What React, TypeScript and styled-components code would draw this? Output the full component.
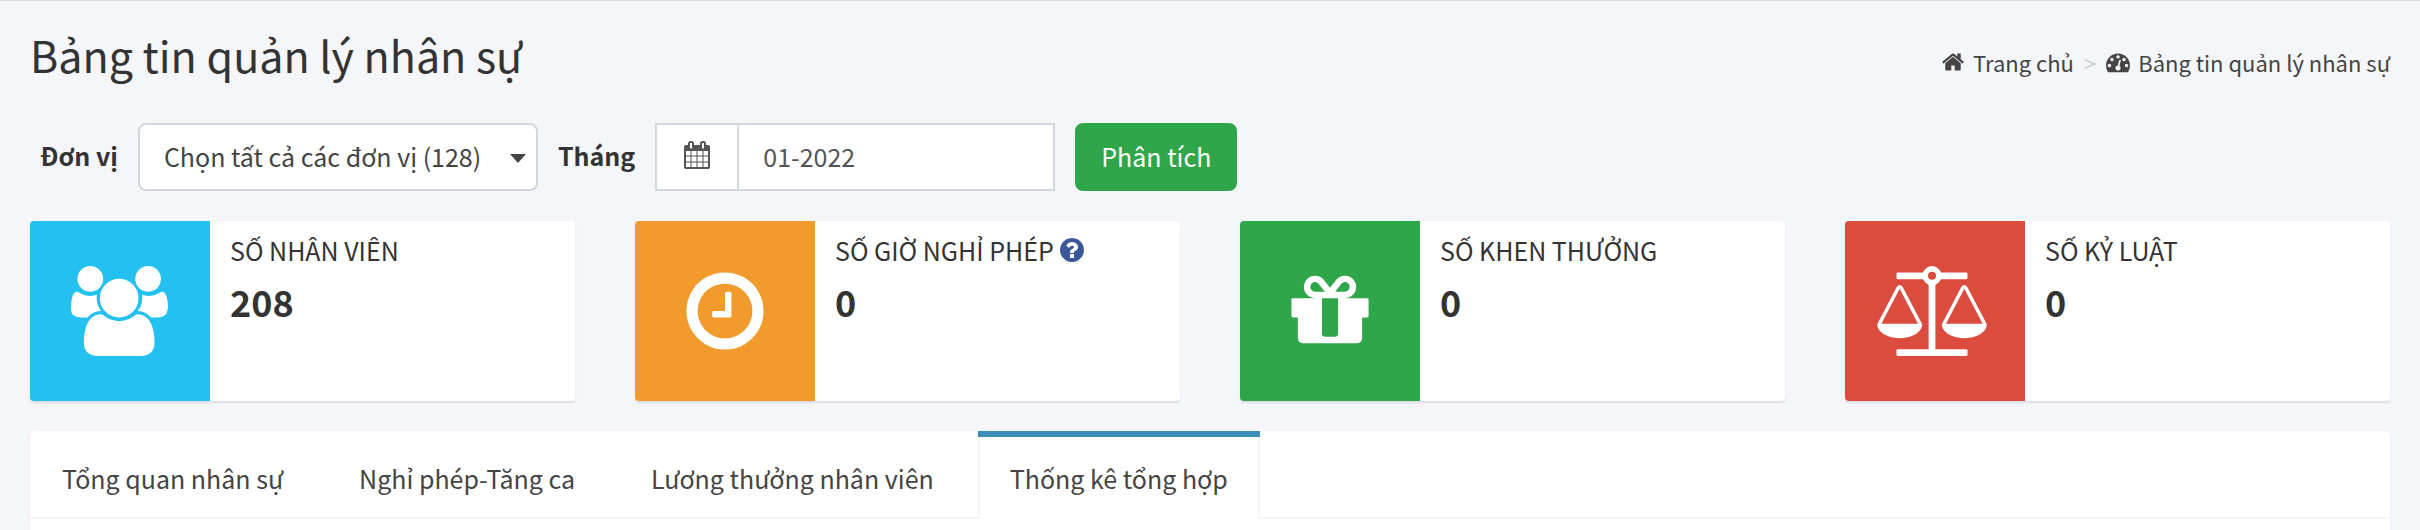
import React from 'react';
import styled, { createGlobalStyle } from 'styled-components';

const GlobalStyle = createGlobalStyle`
  *, *::before, *::after { box-sizing: border-box; }
  body {
    margin: 0;
    background: #f4f6fa;
    color: #333;
    font-family: "Noto Sans CJK SC", "Noto Sans", sans-serif;
    font-size: 25px;
    line-height: 40px;
  }
  button, input, select { font: inherit; }
`;

const Page = styled.main`
  min-height: 100vh;
  display: flex;
  flex-direction: column;
  padding: 0 30px;
  border-top: 1px solid #dcdde3;
`;

const Header = styled.header`
  display: flex;
  justify-content: space-between;
  align-items: flex-start;
  padding-top: 23px;
`;

const Title = styled.h1`
  margin: 0;
  font-size: 43px;
  font-weight: 400;
  line-height: 60px;
`;

const Breadcrumb = styled.nav`
  display: flex;
  align-items: center;
  padding-top: 18px;
  font-size: 22px;
  line-height: 40px;
`;

const Crumb = styled.a`
  display: flex;
  align-items: center;
  gap: 8px;
  color: #444;
  text-decoration: none;
`;

const Separator = styled.span`
  padding: 0 10px;
  color: #ccc;
`;

const Filters = styled.form`
  display: flex;
  align-items: center;
  gap: 20px;
  padding: 39px 0 30px 10px;
`;

const FilterLabel = styled.label`
  padding-bottom: 4px;
  font-weight: 700;
`;

const SelectBox = styled.div`
  position: relative;
  width: 400px;
  height: 68px;
`;

const Select = styled.select`
  appearance: none;
  width: 100%;
  height: 100%;
  padding: 0 40px 2px 24px;
  border: 2px solid #d2d6de;
  border-radius: 8px;
  background: #fff;
  color: #444;
`;

const Caret = styled.svg`
  position: absolute;
  top: 31px;
  right: 12px;
  pointer-events: none;
`;

const InputGroup = styled.div`
  display: flex;
  width: 400px;
  height: 68px;
  border: 2px solid #d2d6de;
  background: #fff;
`;

const Addon = styled.span`
  display: flex;
  align-items: center;
  justify-content: center;
  width: 82px;
  padding-bottom: 4px;
  border-right: 2px solid #d2d6de;
  color: #555;
`;

const MonthInput = styled.input`
  flex: 1;
  min-width: 0;
  padding: 0 24px 2px;
  border: 0;
  background: transparent;
  color: #555;
`;

const SubmitButton = styled.button`
  height: 68px;
  padding: 0 26px 2px;
  border: 0;
  border-radius: 8px;
  background: #30a64a;
  color: #fff;
`;

const Cards = styled.section`
  display: grid;
  grid-template-columns: repeat(4, 1fr);
  gap: 60px;
`;

const Card = styled.article`
  display: flex;
  min-height: 180px;
  overflow: hidden;
  border-radius: 4px;
  background: #fff;
  box-shadow: 0 2px 2px rgba(0, 0, 0, 0.1);
`;

const CardIcon = styled.div<{ $color: string }>`
  display: flex;
  flex: none;
  align-items: center;
  justify-content: center;
  width: 180px;
  background: ${(p) => p.$color};
  color: #fff;
`;

const CardBody = styled.div`
  padding: 9px 20px;
`;

const CardLabel = styled.div`
  display: flex;
  align-items: center;
  gap: 4px;
`;

const CardValue = styled.div`
  padding-top: 11px;
  font-size: 36px;
  font-weight: 700;
`;

const HelpButton = styled.button`
  display: flex;
  padding: 0;
  border: 0;
  background: none;
  color: #3b5998;
`;

const TabPanel = styled.section`
  flex: 1;
  margin-top: 30px;
  border-radius: 6px 6px 0 0;
  background: #fff;
  box-shadow: 0 2px 2px rgba(0, 0, 0, 0.1);
`;

const TabList = styled.div`
  display: flex;
  gap: 12px;
  border-bottom: 2px solid #f4f4f4;
`;

const Tab = styled.button<{ $active: boolean }>`
  margin: 6px 0 -2px;
  padding: 21px 30px;
  border: solid ${(p) => (p.$active ? '#f4f4f4' : 'transparent')};
  border-width: 0 2px;
  background: ${(p) => (p.$active ? '#fff' : 'transparent')};
  box-shadow: ${(p) => (p.$active ? '0 -6px 0 #3c8dbc' : 'none')};
  color: #444;
  line-height: 40px;
`;

const glyphs = {
  users: 'M593 896q-162 5-265 128h-134q-82 0-138-40.5t-56-118.5q0-353 124-353 6 0 43.5 21t97.5 42.5 119 21.5q67 0 133-23-5 37-5 66 0 159 93 256zm1071 637q0 120-73 189.5t-194 69.5h-874q-121 0-194-69.5t-73-189.5q0-53 3.5-103.5t14-109 26.5-108.5 43-97.5 62-81 85.5-53.5 111.5-20q10 0 43 21.5t73 48 107 48 135 21.5 135-21.5 107-48 73-48 43-21.5q61 0 111.5 20t85.5 53.5 62 81 43 97.5 26.5 108.5 14 109 3.5 103.5zm-1024-1277q0 106-75 181t-181 75-181-75-75-181 75-181 181-75 181 75 75 181zm704 384q0 159-112.5 271.5t-271.5 112.5-271.5-112.5-112.5-271.5 112.5-271.5 271.5-112.5 271.5 112.5 112.5 271.5zm576 225q0 78-56 118.5t-138 40.5h-134q-103-123-265-128 93-97 93-256 0-29-5-66 66 23 133 23 59 0 119-21.5t97.5-42.5 43.5-21q124 0 124 353zm-128-609q0 106-75 181t-181 75-181-75-75-181 75-181 181-75 181 75 75 181z',
  clock: 'M1024 544v448q0 14-9 23t-23 9h-320q-14 0-23-9t-9-23v-64q0-14 9-23t23-9h224v-352q0-14 9-23t23-9h64q14 0 23 9t9 23zm416 352q0-148-73-273t-198-198-273-73-273 73-198 198-73 273 73 273 198 198 273 73 273-73 198-198 73-273zm224 0q0 209-103 385.5t-279.5 279.5-385.5 103-385.5-103-279.5-279.5-103-385.5 103-385.5 279.5-279.5 385.5-103 385.5 103 279.5 279.5 103 385.5z',
  gift: 'M1056 1356v-716h-320v716q0 25 18 38.5t46 13.5h192q28 0 46-13.5t18-38.5zm-456-844h195l-126-161q-26-31-69-31-40 0-68 28t-28 68 28 68 68 28zm688-96q0-40-28-68t-68-28q-43 0-69 31l-125 161h194q40 0 68-28t28-68zm376 256v320q0 14-9 23t-23 9h-96v416q0 40-28 68t-68 28h-1088q-40 0-68-28t-28-68v-416h-96q-14 0-23-9t-9-23v-320q0-14 9-23t23-9h440q-93 0-158.5-65.5t-65.5-158.5 65.5-158.5 158.5-65.5q107 0 168 77l128 165 128-165q61-77 168-77 93 0 158.5 65.5t65.5 158.5-65.5 158.5-158.5 65.5h440q14 0 23 9t9 23z',
  calendar: 'M192 1664h288v-288h-288v288zm352 0h320v-288h-320v288zm-352-352h288v-320h-288v320zm352 0h320v-320h-320v320zm-352-384h288v-288h-288v288zm736 736h320v-288h-320v288zm-384-736h320v-288h-320v288zm768 736h288v-288h-288v288zm-384-352h320v-320h-320v320zm-352-864v-288q0-13-9.5-22.5t-22.5-9.5h-64q-13 0-22.5 9.5t-9.5 22.5v288q0 13 9.5 22.5t22.5 9.5h64q13 0 22.5-9.5t9.5-22.5zm736 864h288v-320h-288v320zm-384-384h320v-288h-320v288zm384 0h288v-288h-288v288zm32-480v-288q0-13-9.5-22.5t-22.5-9.5h-64q-13 0-22.5 9.5t-9.5 22.5v288q0 13 9.5 22.5t22.5 9.5h64q13 0 22.5-9.5t9.5-22.5zm384-64v1280q0 52-38 90t-90 38h-1408q-52 0-90-38t-38-90v-1280q0-52 38-90t90-38h128v-96q0-66 47-113t113-47h64q66 0 113 47t47 113v96h384v-96q0-66 47-113t113-47h64q66 0 113 47t47 113v96h128q52 0 90 38t38 90z',
  home: 'M1472 992v480q0 26-19 45t-45 19h-384v-384h-256v384h-384q-26 0-45-19t-19-45v-480q0-1 .5-3t.5-3l575-474 575 474q1 2 1 6zm223-69l-62 74q-8 9-21 11h-3q-13 0-21-7l-692-577-692 577q-12 8-24 7-13-2-21-11l-62-74q-8-10-7-23.5t11-21.5l719-599q32-26 76-26t76 26l244 204v-195q0-14 9-23t23-9h192q14 0 23 9t9 23v408l219 182q10 8 11 21.5t-7 23.5z',
  help: 'M1024 1376v-192q0-14-9-23t-23-9h-192q-14 0-23 9t-9 23v192q0 14 9 23t23 9h192q14 0 23-9t9-23zm256-672q0-88-55.5-163t-138.5-116-170-41q-243 0-371 213-15 24 8 42l132 100q7 6 19 6 16 0 25-12 53-68 86-92 34-24 86-24 48 0 85.5 26t37.5 59q0 38-20 61t-68 45q-63 28-115.5 86.5t-52.5 125.5v36q0 14 9 23t23 9h192q14 0 23-9t9-23q0-19 21.5-49.5t54.5-49.5q32-18 49-28.5t46-35 44.5-48 28-60.5 12.5-81zm384 192q0 209-103 385.5t-279.5 279.5-385.5 103-385.5-103-279.5-279.5-103-385.5 103-385.5 279.5-279.5 385.5-103 385.5 103 279.5 279.5 103 385.5z',
  gauge: 'M384 1152q0-53-37.5-90.5t-90.5-37.5-90.5 37.5-37.5 90.5 37.5 90.5 90.5 37.5 90.5-37.5 37.5-90.5zm192-448q0-53-37.5-90.5t-90.5-37.5-90.5 37.5-37.5 90.5 37.5 90.5 90.5 37.5 90.5-37.5 37.5-90.5zm428 481l101-382q6-26-7.5-48.5t-38.5-29.5-48 6.5-30 39.5l-101 382q-60 5-107 43.5t-63 98.5q-20 77 20 146t117 89 146-20 89-117q16-60-6-117t-72-91zm660-33q0-53-37.5-90.5t-90.5-37.5-90.5 37.5-37.5 90.5 37.5 90.5 90.5 37.5 90.5-37.5 37.5-90.5zm-640-640q0-53-37.5-90.5t-90.5-37.5-90.5 37.5-37.5 90.5 37.5 90.5 90.5 37.5 90.5-37.5 37.5-90.5zm448 192q0-53-37.5-90.5t-90.5-37.5-90.5 37.5-37.5 90.5 37.5 90.5 90.5 37.5 90.5-37.5 37.5-90.5zm320 448q0 261-141 483-19 29-54 29h-1402q-35 0-54-29-141-221-141-483 0-182 71-348t191-286 286-191 348-71 348 71 286 191 191 286 71 348z',
};

type GlyphName = keyof typeof glyphs;

function Glyph({ name, size }: { name: GlyphName; size: number }) {
  const unitWidth = name === 'users' ? 1952 : 1792;
  return (
    <svg
      width={Math.round((size * unitWidth) / 1792)}
      height={size}
      viewBox={`0 0 ${unitWidth} 1792`}
      fill="currentColor"
      aria-hidden="true"
    >
      <path d={glyphs[name]} />
    </svg>
  );
}

function ScaleIcon() {
  return (
    <svg width="116" height="90" viewBox="0 0 116 90" fill="currentColor" aria-hidden="true">
      <rect x="19.5" y="6.4" width="71" height="6.8" rx="1.4" />
      <rect x="19.5" y="83.2" width="71" height="6.8" rx="1.4" />
      <rect x="51.6" y="16" width="6.8" height="70" />
      <circle cx="55" cy="9.7" r="6.8" fill="#db4c3f" stroke="currentColor" strokeWidth="5.6" />
      {[22.7, 87.3].map((x) => (
        <g key={x} transform={`translate(${x} 0)`}>
          <path
            d="M-20.6 58.4L-1.4 21.6Q0 19.6 1.4 21.6L20.6 58.4"
            fill="none"
            stroke="currentColor"
            strokeWidth="3.4"
            strokeLinejoin="round"
          />
          <path d="M-22.5 57.8H22.5C22.5 67 11 72.2 0 72.2S-22.5 67-22.5 57.8Z" />
        </g>
      ))}
    </svg>
  );
}

const cards = [
  { label: 'SỐ NHÂN VIÊN', value: 208, color: '#22c1ef', icon: <Glyph name="users" size={90} /> },
  { label: 'SỐ GIỜ NGHỈ PHÉP', value: 0, color: '#f19b2c', icon: <Glyph name="clock" size={90} />, help: true },
  { label: 'SỐ KHEN THƯỞNG', value: 0, color: '#30a64a', icon: <Glyph name="gift" size={90} /> },
  { label: 'SỐ KỶ LUẬT', value: 0, color: '#db4c3f', icon: <ScaleIcon /> },
];

const tabs = ['Tổng quan nhân sự', 'Nghỉ phép-Tăng ca', 'Lương thưởng nhân viên', 'Thống kê tổng hợp'];

export default function App() {
  const [active, setActive] = React.useState(3);
  return (
    <Page>
      <GlobalStyle />
      <Header>
        <Title>Bảng tin quản lý nhân sự</Title>
        <Breadcrumb aria-label="Breadcrumb">
          <Crumb href="#home">
            <Glyph name="home" size={24} />
            Trang chủ
          </Crumb>
          <Separator>&gt;</Separator>
          <Crumb href="#dashboard">
            <Glyph name="gauge" size={24} />
            Bảng tin quản lý nhân sự
          </Crumb>
        </Breadcrumb>
      </Header>

      <Filters onSubmit={(e) => e.preventDefault()}>
        <FilterLabel htmlFor="unit">Đơn vị</FilterLabel>
        <SelectBox>
          <Select id="unit">
            <option>Chọn tất cả các đơn vị (128)</option>
          </Select>
          <Caret width="16" height="9" viewBox="0 0 16 9" fill="#444" aria-hidden="true">
            <path d="M0 0H16L8 9Z" />
          </Caret>
        </SelectBox>
        <FilterLabel htmlFor="month">Tháng</FilterLabel>
        <InputGroup>
          <Addon>
            <Glyph name="calendar" size={28} />
          </Addon>
          <MonthInput id="month" type="text" defaultValue="01-2022" />
        </InputGroup>
        <SubmitButton type="submit">Phân tích</SubmitButton>
      </Filters>

      <Cards>
        {cards.map((card) => (
          <Card key={card.label}>
            <CardIcon $color={card.color}>{card.icon}</CardIcon>
            <CardBody>
              <CardLabel>
                {card.label}
                {card.help && (
                  <HelpButton type="button" aria-label={card.label}>
                    <Glyph name="help" size={28} />
                  </HelpButton>
                )}
              </CardLabel>
              <CardValue>{card.value}</CardValue>
            </CardBody>
          </Card>
        ))}
      </Cards>

      <TabPanel>
        <TabList role="tablist">
          {tabs.map((tab, i) => (
            <Tab
              key={tab}
              type="button"
              role="tab"
              aria-selected={i === active}
              $active={i === active}
              onClick={() => setActive(i)}
            >
              {tab}
            </Tab>
          ))}
        </TabList>
      </TabPanel>
    </Page>
  );
}
